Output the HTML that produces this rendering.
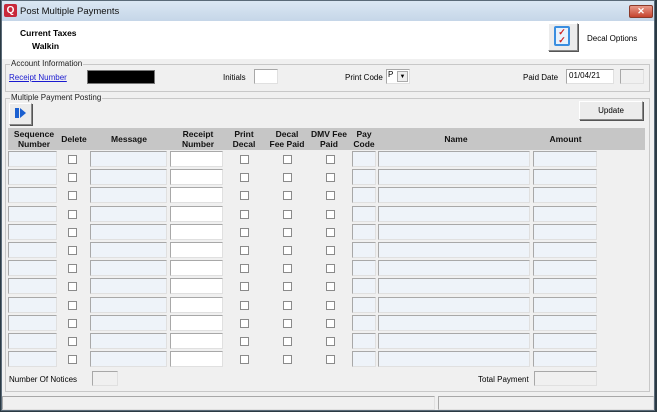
<!DOCTYPE html><html><head><style>
*{margin:0;padding:0;box-sizing:border-box}
body{width:657px;height:412px;overflow:hidden;background:#2b3a44;font-family:"Liberation Sans",sans-serif;font-size:8px;position:relative}
.a{position:absolute}
.win{left:1px;top:0;width:654px;height:411px;background:#f0f0f0;border:1px solid #5a6a78}
.tb{left:0;top:0;width:652px;height:20px;background:linear-gradient(#dbe7f3,#c5d6e8)}
.in{position:absolute;background:#eef3f9;border:1px solid #a8a8a8;border-right-color:#e0e0e0;border-bottom-color:#e0e0e0}
.w{background:#fff}
.cb{position:absolute;width:9px;height:9px;background:#fff;border:1px solid #8a8a8a}
.grp{position:absolute;border:1px solid #c8c8c8}
.lbl{position:absolute;background:#f0f0f0;padding:0 1px;color:#222}
.hd{position:absolute;font-weight:bold;font-size:8.5px;text-align:center;line-height:10px;color:#111}
.btn{position:absolute;background:#ececec;border:1px solid #888;border-top-color:#fff;border-left-color:#fff;box-shadow:1px 1px 0 #555}
</style></head><body>
<div class="a win">
<div class="a tb"></div>
<div class="a" style="left:2px;top:3px;width:13px;height:13px;background:#c8283a;border-radius:2px;color:#fff;font-weight:bold;font-size:10px;text-align:center;line-height:13px">Q</div>
<div class="a" style="left:18px;top:5px;font-size:9.5px;color:#111">Post Multiple Payments</div>
<div class="a" style="left:627px;top:4px;width:24px;height:13px;background:linear-gradient(#e89a8a,#c5432e);border:1px solid #8a3a2a;border-radius:2px;color:#fff;font-size:9px;text-align:center;line-height:11px;font-weight:bold">✕</div>
<div class="a" style="left:0;top:20px;width:652px;height:38px;background:#fff"></div>
<div class="a" style="left:18px;top:27px;font-weight:bold;font-size:8.5px">Current Taxes</div>
<div class="a" style="left:30px;top:40px;font-weight:bold;font-size:8.5px">Walkin</div>
<div class="btn" style="left:546px;top:22px;width:30px;height:28px"></div>
<div class="a" style="left:552px;top:25px;width:16px;height:20px;border:2px solid #3a8ee0;border-radius:2px;background:#e8f2fc;color:#d02020;font-size:9px;line-height:8px;text-align:center;font-weight:bold">✓<br>✓</div>
<div class="a" style="left:585px;top:33px">Decal Options</div>
<div class="grp" style="left:3px;top:63px;width:645px;height:28px"></div>
<div class="lbl" style="left:8px;top:58px">Account Information</div>
<div class="a" style="left:7px;top:72px;color:#1a1ad0;text-decoration:underline">Receipt Number</div>
<div class="a" style="left:85px;top:69px;width:68px;height:14px;background:#000;border:1px solid #777"></div>
<div class="a" style="left:221px;top:72px">Initials</div>
<div class="in w" style="left:252px;top:68px;width:24px;height:15px"></div>
<div class="a" style="left:343px;top:72px">Print Code</div>
<div class="in w" style="left:384px;top:68px;width:24px;height:15px;padding-left:1px">P</div>
<div class="a" style="left:395px;top:70px;width:11px;height:11px;background:#eee;border:1px solid #aaa;font-size:6px;text-align:center;line-height:10px">▼</div>
<div class="a" style="left:521px;top:72px">Paid Date</div>
<div class="in w" style="left:564px;top:68px;width:48px;height:15px;padding:1px 2px">01/04/21</div>
<div class="in" style="left:618px;top:68px;width:24px;height:15px;background:#f0f0f0"></div>
<div class="grp" style="left:3px;top:97px;width:645px;height:294px"></div>
<div class="lbl" style="left:8px;top:92px">Multiple Payment Posting</div>
<div class="btn" style="left:7px;top:102px;width:23px;height:22px"></div>
<div class="a" style="left:13px;top:107px;width:4px;height:10px;background:#1a5fd0"></div>
<div class="a" style="left:18px;top:107px;width:0;height:0;border-top:5px solid transparent;border-bottom:5px solid transparent;border-left:6px solid #1a5fd0"></div>
<div class="btn" style="left:577px;top:100px;width:64px;height:19px;text-align:center;line-height:17px">Update</div>
<div class="a" style="left:6px;top:127px;width:637px;height:22px;background:#c6c6c6"></div>
<div class="hd" style="left:6px;top:128px;width:52px">Sequence<br>Number</div>
<div class="hd" style="left:55px;top:133px;width:34px">Delete</div>
<div class="hd" style="left:91px;top:133px;width:72px">Message</div>
<div class="hd" style="left:169px;top:128px;width:54px">Receipt<br>Number</div>
<div class="hd" style="left:225px;top:128px;width:34px">Print<br>Decal</div>
<div class="hd" style="left:263px;top:128px;width:44px">Decal<br>Fee Paid</div>
<div class="hd" style="left:305px;top:128px;width:44px">DMV Fee<br>Paid</div>
<div class="hd" style="left:348px;top:128px;width:28px">Pay<br>Code</div>
<div class="hd" style="left:379px;top:133px;width:150px">Name</div>
<div class="hd" style="left:532px;top:133px;width:63px">Amount</div>
<div id="rows"></div>
<div class="a" style="left:7px;top:374px">Number Of Notices</div>
<div class="in" style="left:90px;top:370px;width:26px;height:15px;background:#f0f0f0"></div>
<div class="a" style="left:476px;top:374px">Total Payment</div>
<div class="in" style="left:532px;top:370px;width:63px;height:15px;background:#f0f0f0"></div>
<div class="in" style="left:0px;top:395px;width:433px;height:14px;background:#f0f0f0"></div>
<div class="in" style="left:436px;top:395px;width:216px;height:14px;background:#f0f0f0"></div>
</div>
<script>
var h='';for(var i=0;i<12;i++){var y=150+i*18.2;
h+='<div class="in" style="left:6px;top:'+y+'px;width:49px;height:16px"></div>';
h+='<div class="cb" style="left:66px;top:'+(y+4)+'px"></div>';
h+='<div class="in" style="left:88px;top:'+y+'px;width:77px;height:16px"></div>';
h+='<div class="in w" style="left:168px;top:'+y+'px;width:53px;height:16px"></div>';
h+='<div class="cb" style="left:238px;top:'+(y+4)+'px"></div>';
h+='<div class="cb" style="left:281px;top:'+(y+4)+'px"></div>';
h+='<div class="cb" style="left:324px;top:'+(y+4)+'px"></div>';
h+='<div class="in" style="left:350px;top:'+y+'px;width:24px;height:16px"></div>';
h+='<div class="in" style="left:376px;top:'+y+'px;width:152px;height:16px"></div>';
h+='<div class="in" style="left:531px;top:'+y+'px;width:64px;height:16px"></div>';}
document.getElementById('rows').innerHTML=h;
</script>
</body></html>
